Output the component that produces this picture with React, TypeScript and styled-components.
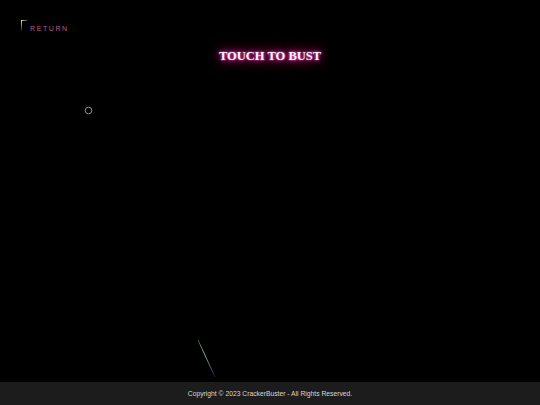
import { createGlobalStyle, styled } from 'styled-components';

const GlobalStyle = createGlobalStyle`
  html, body {
    margin: 0;
    padding: 0;
    background: #000;
  }

  #root {
    height: 100vh;
  }
`;

const Root = styled.div`
  position: relative;
  height: 100%;

  display: flex;
  flex-direction: column;

  background: #000;
  overflow: hidden;
`;

const Stage = styled.main`
  position: relative;
  flex: 1;

  display: flex;
  flex-direction: column;
  padding: 20px 21px 0;
`;

const ReturnLink = styled.a`
  position: relative;
  align-self: flex-start;

  padding: 5px 0 0 9px;

  font-family: 'Liberation Sans', Arial, sans-serif;
  font-size: 7px;
  letter-spacing: 1.6px;
  color: #b85c8e;
  text-decoration: none;
  cursor: pointer;

  &::before {
    content: '';
    position: absolute;
    left: 0;
    top: 0;
    width: 1px;
    height: 11px;
    background: linear-gradient(#e8d9b8, rgba(120, 90, 110, 0.3));
  }

  &::after {
    content: '';
    position: absolute;
    left: 0;
    top: 0;
    width: 6px;
    height: 1px;
    background: linear-gradient(90deg, #e8d9b8, rgba(200, 160, 160, 0.4));
  }
`;

const Title = styled.h1`
  align-self: center;
  margin: 17px 0 0;

  font-family: 'Liberation Serif', 'Times New Roman', serif;
  font-size: 12.5px;
  font-weight: 700;
  color: #fff4fb;
  text-shadow:
    0 0 3px #ff6fd0,
    0 0 7px #d0188e,
    0 0 12px #b0127a,
    0 0 18px #8a0c62,
    0 0 26px #6a0a4c,
    0 0 36px #4a0636;
`;

const Spark = styled.svg`
  position: absolute;
  left: 84px;
  top: 106px;
  width: 9px;
  height: 9px;
`;

const Trail = styled.svg`
  position: absolute;
  left: 195px;
  top: 336px;
  width: 24px;
  height: 46px;
`;

const Footer = styled.footer`
  height: 23px;

  display: flex;
  align-items: center;
  justify-content: center;
  padding-bottom: 1px;
  box-sizing: border-box;

  background: #1c1c1c;
  font-family: 'Liberation Sans', Arial, sans-serif;
  font-size: 6.75px;
  color: #d8d8d8;
`;

export default function App() {
  return (
    <Root>
      <GlobalStyle />
      <Stage>
        <ReturnLink>RETURN</ReturnLink>
        <Title>TOUCH TO BUST</Title>

        <Spark viewBox="0 0 9 9">
          <circle cx="4.5" cy="4.5" r="3.3" fill="none" stroke="#8fa89a" strokeWidth="0.9" />
        </Spark>

        <Trail viewBox="0 0 24 46">
          <defs>
            <linearGradient id="trail" x1="0" y1="0" x2="1" y2="1">
              <stop offset="0" stopColor="#3c6b4a" />
              <stop offset="0.4" stopColor="#7fd6a0" />
              <stop offset="0.75" stopColor="#6a5a8a" />
              <stop offset="1" stopColor="#2a1a3a" />
            </linearGradient>
          </defs>
          <line x1="3" y1="4" x2="20" y2="41" stroke="url(#trail)" strokeWidth="0.9" />
        </Trail>
      </Stage>
      <Footer>Copyright © 2023 CrackerBuster - All Rights Reserved.</Footer>
    </Root>
  );
}
